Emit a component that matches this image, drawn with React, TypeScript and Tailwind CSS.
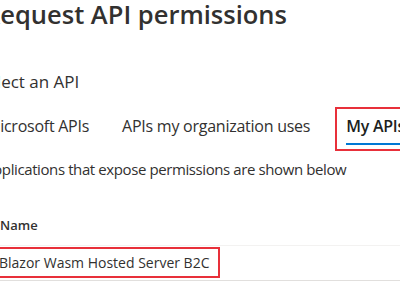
import React from "react";

export default function App() {
  return (
    <div
      className="w-[400px] h-[284px] overflow-hidden bg-white text-[#323130]"
      style={{ fontFamily: '"Open Sans", "Noto Sans", sans-serif' }}
    >
      <div className="ml-[-20px] w-[460px]">
        <h1 className="text-[25.5px] leading-[32px] font-semibold ml-[4px] mt-[-2px] whitespace-nowrap">
          Request API permissions
        </h1>
        <div className="mt-[41px] text-[17px] leading-[22px] ml-[-2px] whitespace-nowrap">Select an API</div>
        <div className="mt-[14px] flex items-start text-[16px] leading-[22px] tracking-[-0.25px] whitespace-nowrap">
          <div className="ml-[6px] pt-[8px]">Microsoft APIs</div>
          <div className="ml-[33px] pt-[8px]">APIs my organization uses</div>
          <div className="ml-[25px] h-[44px] border-2 border-[#e8303a] pl-[9px] pr-[9px] pt-[6px]">
            <div className="font-semibold text-[#201f1e]">My APIs</div>
            <div className="h-[2px] bg-[#0078d4] mt-[6px]" />
          </div>
        </div>
        <div className="mt-[8px] text-[15px] leading-[20px] tracking-[-0.4px] ml-[4px] whitespace-nowrap">
          Applications that expose permissions are shown below
        </div>
        <div className="mt-[37px] text-[13px] leading-[18px] font-semibold ml-[20px]">Name</div>
        <div className="mt-[11px] border-t border-[#f3f2f1] border-b border-b-[#e1dfdd] pt-[1px] pb-[2px]">
          <div className="w-[240px] h-[31px] border-2 border-[#e8303a] flex items-center pl-[17px] text-[14px] whitespace-nowrap">
            Blazor Wasm Hosted Server B2C
          </div>
        </div>
      </div>
    </div>
  );
}
